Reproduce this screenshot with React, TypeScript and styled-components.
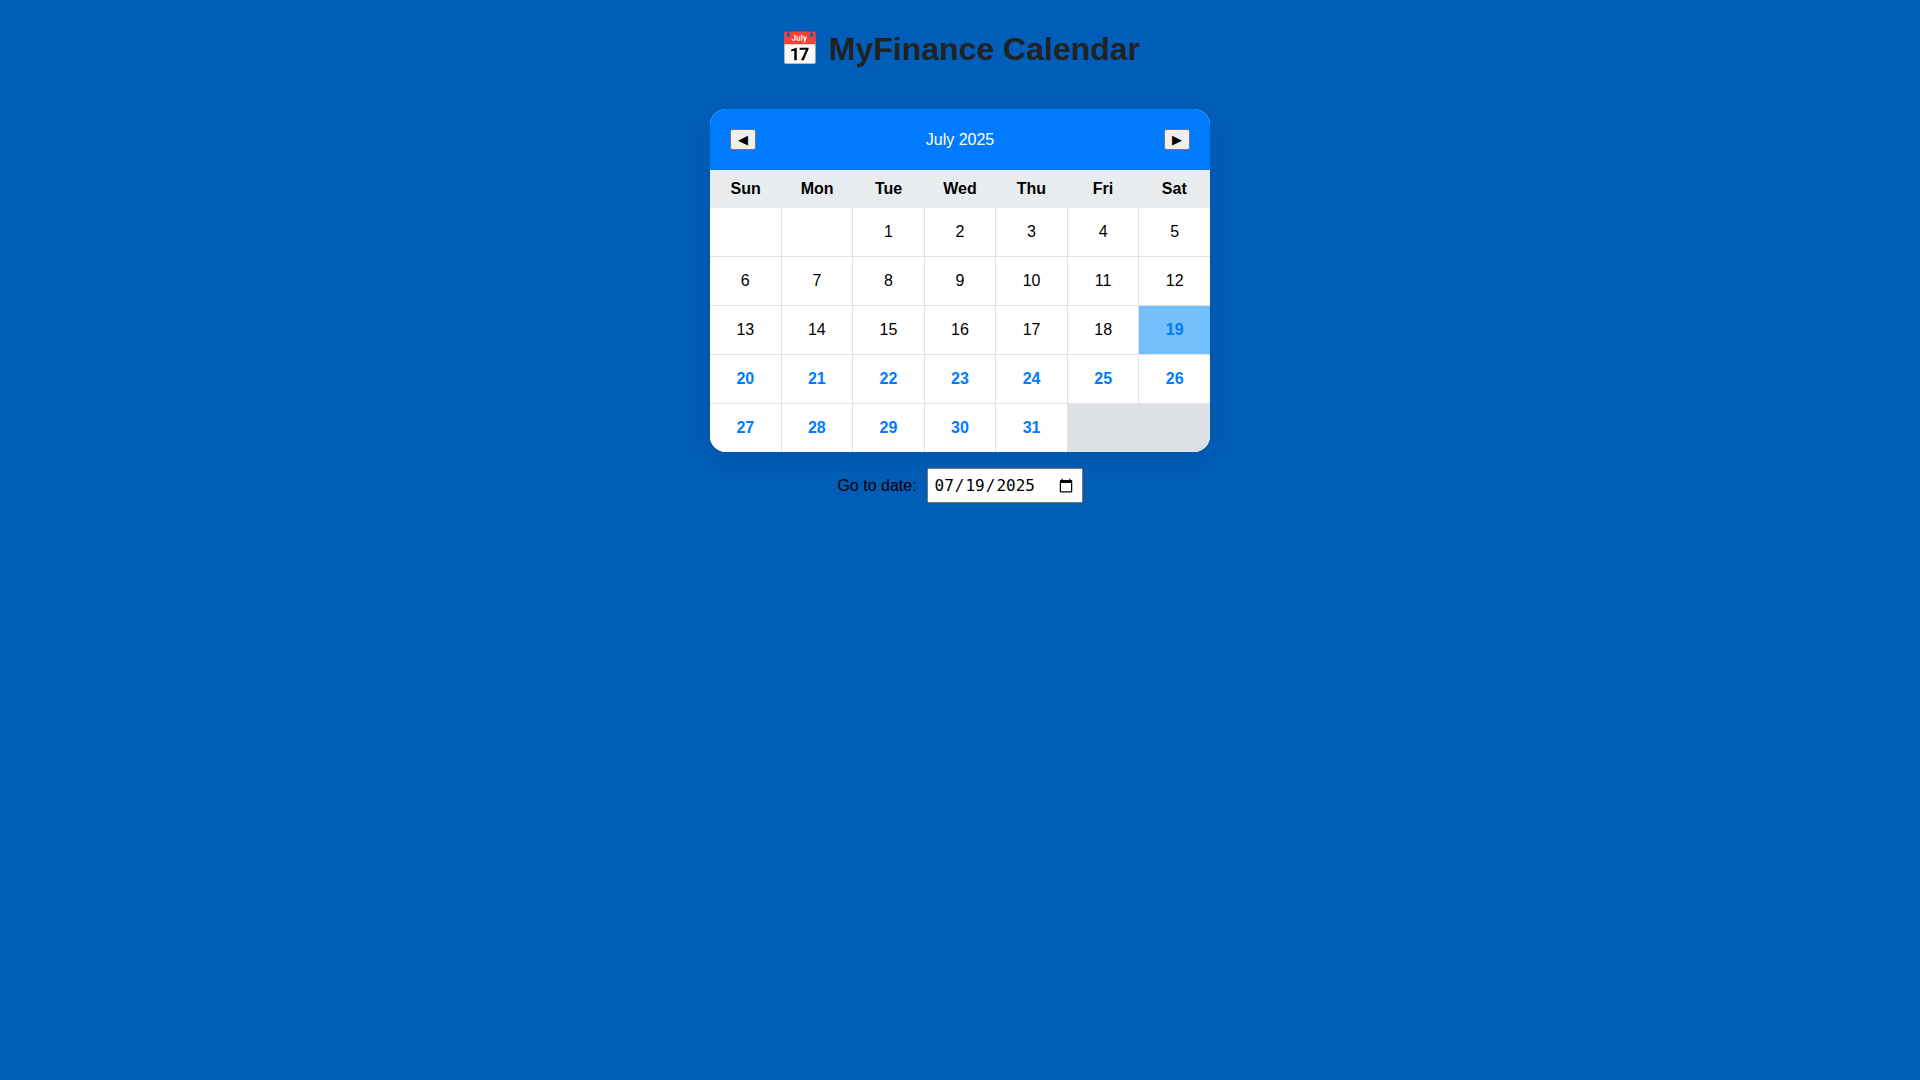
import React, { useState } from "react";
import styled, { createGlobalStyle } from "styled-components";

const GlobalStyle = createGlobalStyle`
  *, *::before, *::after { box-sizing: border-box; }
  body {
    margin: 0;
    padding: 20px;
    background: #005eb8;
    font-family: "Liberation Sans", Arial, sans-serif;
  }
`;

const Page = styled.main`
  display: flex;
  flex-direction: column;
  align-items: center;
`;

const Title = styled.h1`
  margin: 10px 0 40px;
  color: #222;
  font-size: 32px;
  line-height: 39px;
  font-weight: bold;
  text-align: center;
`;

const Card = styled.section`
  width: 100%;
  max-width: 500px;
  background: #fff;
  border-radius: 16px;
  overflow: hidden;
  box-shadow: 0 8px 30px rgba(0, 0, 0, 0.1);
`;

const CardHeader = styled.header`
  display: flex;
  justify-content: space-between;
  align-items: center;
  padding: 20px;
  background: #007bff;
  color: #fff;
  line-height: 21px;
`;

const NavButton = styled.button`
  cursor: pointer;
`;

const Grid = styled.table`
  display: block;
  text-align: center;
`;

const NamesHead = styled.thead`
  display: block;
  background: #e9ecef;
`;

const DaysBody = styled.tbody`
  display: grid;
  gap: 1px;
  background: #dee2e6;
`;

const Week = styled.tr<{ $gap?: boolean }>`
  display: grid;
  grid-template-columns: repeat(7, 1fr);
  column-gap: ${(p) => (p.$gap ? "1px" : "0")};
`;

const DayName = styled.th`
  padding: 10px 0;
  font-weight: bold;
  line-height: 18px;
`;

const Day = styled.td<{ $upcoming?: boolean; $selected?: boolean }>`
  min-height: 48px;
  padding: 15px 0;
  line-height: 18px;
  background: ${(p) => (p.$selected ? "#74c0fc" : "#fff")};
  color: ${(p) => (p.$upcoming ? "#007bff" : "#000")};
  font-weight: ${(p) => (p.$upcoming ? "bold" : "normal")};
`;

const Picker = styled.div`
  display: flex;
  align-items: center;
  gap: 10px;
  margin-top: 16px;
`;

const DateInput = styled.input`
  padding: 5px;
  font-size: 16px;
`;

const names = ["Sun", "Mon", "Tue", "Wed", "Thu", "Fri", "Sat"];
const weeks: (number | null)[][] = [
  [null, null, 1, 2, 3, 4, 5],
  [6, 7, 8, 9, 10, 11, 12],
  [13, 14, 15, 16, 17, 18, 19],
  [20, 21, 22, 23, 24, 25, 26],
  [27, 28, 29, 30, 31],
];

export default function App() {
  const [date, setDate] = useState("2025-07-19");
  const selected = Number(date.slice(8));
  return (
    <>
      <GlobalStyle />
      <Page>
        <Title>📅 MyFinance Calendar</Title>
        <Card>
          <CardHeader>
            <NavButton type="button" aria-label="Previous month">◀</NavButton>
            <span>July 2025</span>
            <NavButton type="button" aria-label="Next month">▶</NavButton>
          </CardHeader>
          <Grid>
            <NamesHead>
              <Week>{names.map((n) => <DayName key={n} scope="col">{n}</DayName>)}</Week>
            </NamesHead>
            <DaysBody>
              {weeks.map((week, row) => (
                <Week key={row} $gap>
                  {week.map((day, col) => (
                    <Day key={col} $upcoming={day !== null && day >= 19} $selected={day === selected}>
                      {day}
                    </Day>
                  ))}
                </Week>
              ))}
            </DaysBody>
          </Grid>
        </Card>
        <Picker>
          <label htmlFor="goto-date">Go to date:</label>
          <DateInput id="goto-date" type="date" value={date} onChange={(e) => setDate(e.target.value)} />
        </Picker>
      </Page>
    </>
  );
}
